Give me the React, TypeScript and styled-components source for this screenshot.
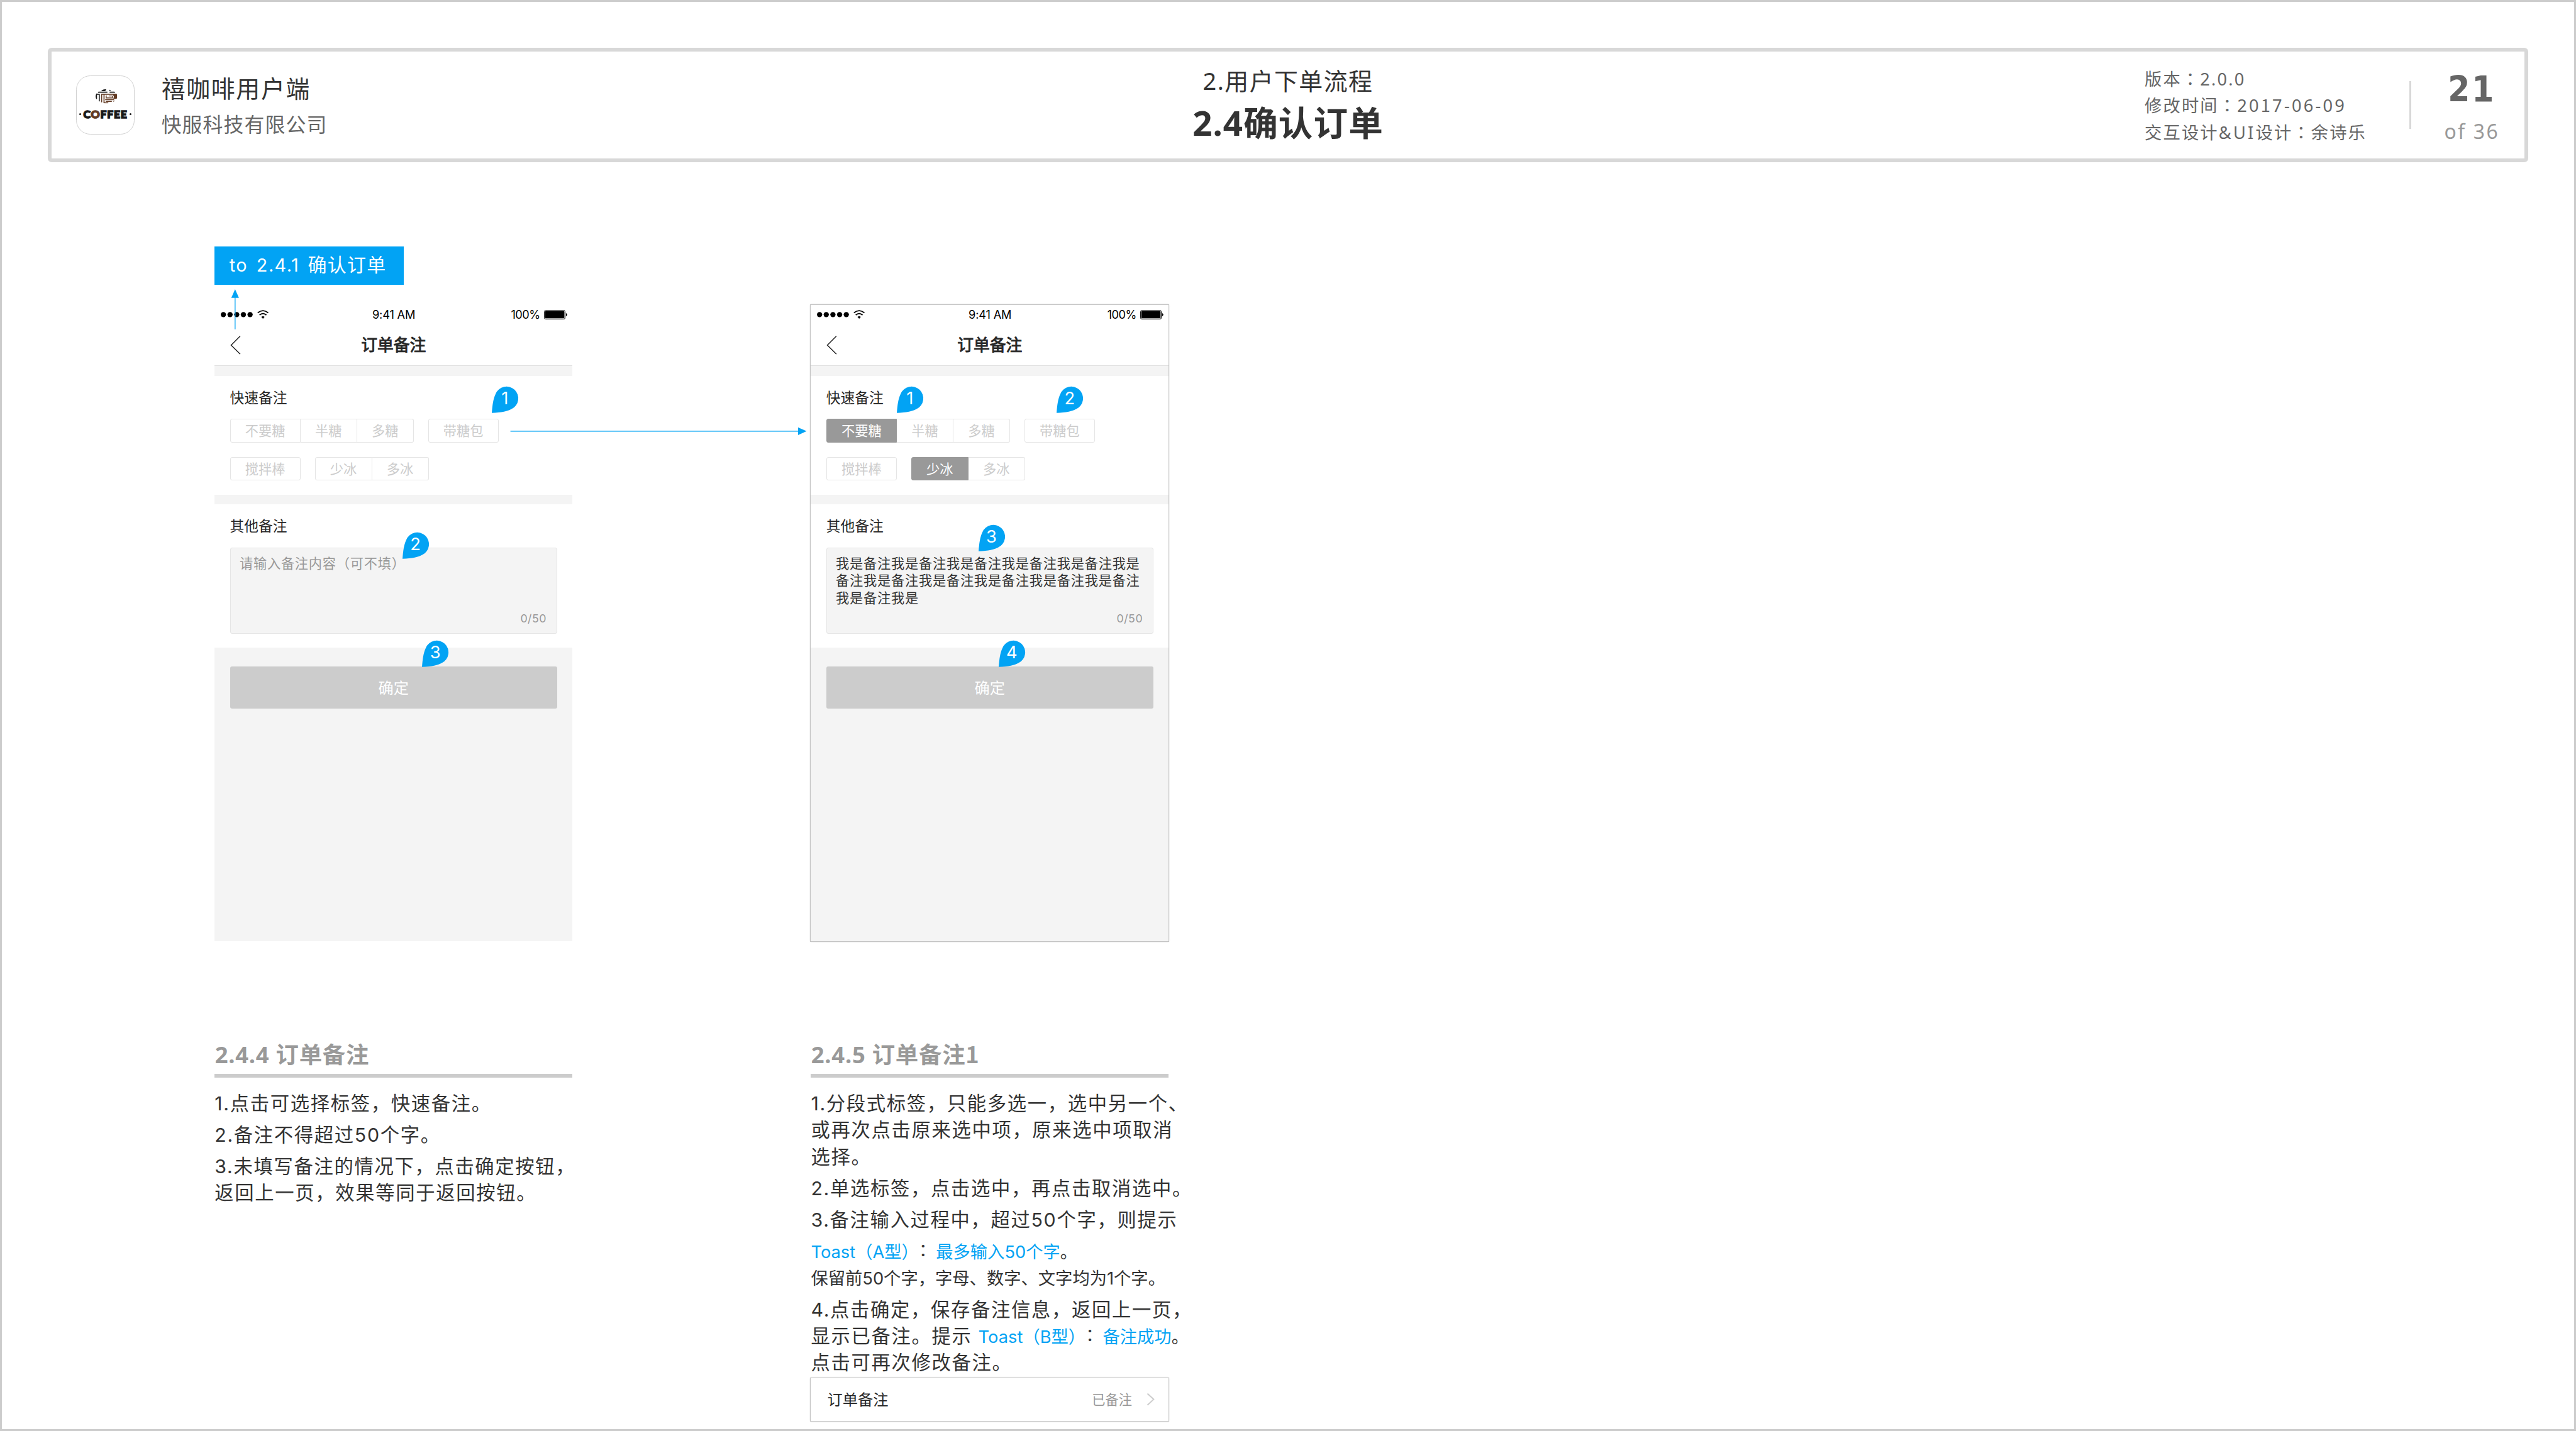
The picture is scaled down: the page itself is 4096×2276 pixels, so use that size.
import React from 'react';
import styled, { createGlobalStyle, css } from 'styled-components';

/* The board is specified on a 5400 x 3000 artboard and shown at a fixed scale. */
const SCALE = 4096 / 5400;
const u = (n: number) => `${Math.round(n * SCALE * 1000) / 1000}px`;

const BLUE = '#02a3f4';
const YAHEI = `'Noto Sans', 'Noto Sans CJK SC', sans-serif`;
const PINGFANG = `Inter, 'Noto Sans CJK SC', sans-serif`;

const type = (size: number, line: number, spacing = 0) => css`
  font-size: ${u(size)};
  line-height: ${u(line)};
  letter-spacing: ${u(spacing)};
`;

const GlobalStyle = createGlobalStyle`
  *, *::before, *::after { box-sizing: border-box; }
  html, body { margin: 0; background: #fff; }
  body { width: 4096px; height: 2276px; overflow: hidden; }
`;

const Board = styled.main`
  width: 4096px;
  height: 2276px;
  border: ${u(4)} solid #ccc;
  padding: ${u(96)};
  background: #fff;
  font-family: ${PINGFANG};
  color: #333;
  white-space: pre;
  text-spacing-trim: space-all;
  overflow: hidden;
`;

/* ---------- header ---------- */

const Header = styled.header`
  display: grid;
  grid-template-columns: 1fr auto 1fr;
  height: ${u(240)};
  border: ${u(8)} solid #d8d8d8;
  border-radius: ${u(8)};
  font-family: ${YAHEI};
`;

const Brand = styled.div`
  display: flex;
  padding: ${u(51)} 0 0 ${u(51.5)};
`;

const Logo = styled.div`
  display: flex;
  flex-direction: column;
  align-items: center;
  width: ${u(123)};
  height: ${u(123)};
  padding-top: ${u(27.2)};
  border: ${u(1.8)} solid #d2d2d2;
  border-radius: ${u(30)};
`;

const LogoMark = styled.svg`
  display: block;
  width: ${u(45.4)};
  height: ${u(29.8)};
  margin-left: ${u(3.6)};
`;

const LogoWord = styled.div`
  display: flex;
  align-items: center;
  justify-content: center;
  gap: ${u(5)};
  margin-top: ${u(6.4)};
  font-family: Lato, sans-serif;
  font-weight: 900;
  color: #1a1a1a;
  -webkit-text-stroke: ${u(2)} currentColor;
  ${type(23, 32, 1.1)}
`;

const LogoAccent = styled.span`
  color: #633b24;
`;

const LogoDot = styled.i`
  width: ${u(4)};
  height: ${u(4)};
  border-radius: 50%;
  background: #1a1a1a;
`;

const BrandText = styled.div`
  margin-left: ${u(56)};
`;

const ProductName = styled.div`
  margin-top: ${u(-7)};
  ${type(50, 66, 2.2)}
`;

const Company = styled.div`
  margin-top: ${u(15)};
  color: #666;
  ${type(42, 56, 1.5)}
`;

const Heading = styled.div`
  text-align: center;
  padding-top: ${u(28.5)};
`;

const Flow = styled.div`
  ${type(50, 66, 1.9)}
`;

const PageTitle = styled.h1`
  margin: ${u(7)} 0 0;
  font-weight: 700;
  ${type(72, 96, 1.4)}
`;

const Meta = styled.div`
  display: flex;
  justify-content: flex-end;
`;

const MetaList = styled.div`
  width: ${u(555.5)};
  padding-top: ${u(30.5)};
  color: #666;
  ${type(36, 56, 2.8)}
`;

const MetaDate = styled.span`
  letter-spacing: ${u(4.2)};
`;

const CenteredMark = styled.span`
  font-family: 'Noto Sans CJK TC', sans-serif;
  line-height: 0;
`;

const MetaDivider = styled.div`
  width: ${u(4)};
  height: ${u(100)};
  margin-top: ${u(62)};
  background: #d8d8d8;
`;

const Pager = styled.div`
  width: ${u(237)};
  padding: ${u(30)} 0 0 ${u(16)};
  text-align: center;
`;

const PageNumber = styled.div`
  font-family: 'DejaVu Sans Condensed', 'DejaVu Sans', sans-serif;
  font-weight: 700;
  color: #666;
  ${type(74, 100, 4)}
`;

const PageCount = styled.div`
  margin-top: ${u(10)};
  color: #999;
  ${type(42, 56, 3.4)}
`;

/* ---------- columns ---------- */

const Columns = styled.section`
  display: flex;
  gap: ${u(500)};
  padding: ${u(177)} 0 0 ${u(350)};
`;

const Column = styled.article`
  width: ${u(750)};
`;

const LinkSlot = styled.div`
  height: ${u(123)};
`;

const LinkTag = styled.div`
  position: relative;
  width: ${u(397)};
  height: ${u(80)};
  padding-left: ${u(31)};
  background: ${BLUE};
  color: #fff;
  word-spacing: ${u(-3.5)};
  ${type(38, 78, 1.9)}
`;

const TagCjk = styled.span`
  margin-left: ${u(8.5)};
  ${type(39.5, 0, 1.7)}
`;

const TagArrow = styled.svg`
  position: absolute;
  left: ${u(34)};
  top: ${u(90)};
  width: ${u(18)};
  height: ${u(85)};
  z-index: 3;
`;

const Phone = styled.div<{ $framed?: boolean }>`
  position: relative;
  width: ${u(750)};
  height: ${u(1334)};
  background: #f4f4f4;
  ${p => p.$framed && css`box-shadow: 0 0 0 ${u(1.4)} #c4c4c4, 0 0 ${u(4)} rgba(0, 0, 0, 0.25);`}
`;

const StatusBar = styled.div`
  display: grid;
  grid-template-columns: 1fr auto 1fr;
  align-items: center;
  height: ${u(40)};
  padding: 0 ${u(12)} 0 ${u(13)};
  background: #fff;
  color: #000;
  ${type(24, 40, -0.2)}
`;

const Signal = styled.svg`
  display: block;
  width: ${u(102)};
  height: ${u(24)};
`;

const Power = styled.div`
  display: flex;
  align-items: center;
  justify-content: flex-end;
  gap: ${u(8.5)};
  margin-right: ${u(-1.5)};
  letter-spacing: ${u(-0.7)};
`;

const Battery = styled.svg`
  display: block;
  width: ${u(49)};
  height: ${u(20)};
`;

const NavBar = styled.div`
  display: flex;
  align-items: center;
  height: ${u(88)};
  padding: 0 ${u(32)};
  border-bottom: 1px solid #dfdfdf;
  background: #fff;
`;

const BackIcon = styled.svg`
  width: ${u(24)};
  height: ${u(42)};
`;

const NavTitle = styled.div`
  flex: 1;
  margin-right: ${u(24)};
  padding-top: ${u(3)};
  text-align: center;
  color: #262626;
  -webkit-text-stroke: ${u(1.2)} currentColor;
  ${type(34, 80, 0)}
`;

const Panel = styled.div`
  height: ${u(250)};
  margin-top: ${u(20)};
  padding: 0 ${u(32)};
  background: #fff;

  & + & { height: ${u(300)}; }
`;

const PanelTitle = styled.div`
  height: ${u(90)};
  color: #262626;
  ${type(30, 92, 0)}
`;

const ChipRow = styled.div`
  display: flex;
  gap: ${u(30)};
  margin-bottom: ${u(30)};
`;

const Segments = styled.div`
  display: flex;
`;

const Chip = styled.div<{ $on?: boolean }>`
  height: ${u(50)};
  padding: 0 ${u(30.7)};
  border: 1px solid ${p => (p.$on ? '#999' : '#e5e5e5')};
  background: ${p => (p.$on ? '#999' : '#fff')};
  color: ${p => (p.$on ? '#fff' : '#ccc')};
  ${type(28, 48, 0)}

  & + & { border-left: 0; }
  &:first-child { border-top-left-radius: ${u(4)}; border-bottom-left-radius: ${u(4)}; }
  &:last-child { border-top-right-radius: ${u(4)}; border-bottom-right-radius: ${u(4)}; }
`;

const RemarkBox = styled.div<{ $filled?: boolean }>`
  display: flex;
  flex-direction: column;
  justify-content: space-between;
  width: ${u(686)};
  height: ${u(181)};
  padding: ${u(15)} ${u(21)} ${u(13)} ${u(19)};
  border: 1px solid #e5e5e5;
  border-radius: ${u(4)};
  background: #f4f4f4;
  color: ${p => (p.$filled ? '#333' : '#999')};
  ${type(28, 36, 1)}
`;

const Counter = styled.div`
  text-align: right;
  color: #999;
  ${type(23.5, 36, 0.6)}
`;

const Confirm = styled.div`
  width: ${u(686)};
  height: ${u(88)};
  margin: ${u(40)} auto 0;
  border-radius: ${u(4)};
  background: #ccc;
  color: #fff;
  text-align: center;
  ${type(32, 90, 0)}
`;

const PinBox = styled.div<{ $x: number; $y: number }>`
  position: absolute;
  left: ${p => u(p.$x)};
  top: ${p => u(p.$y)};
  width: ${u(56)};
  height: ${u(56)};
  padding-right: ${u(1)};
  color: #fff;
  text-align: center;
  z-index: 2;
  ${type(36, 49, 0)}
`;

const PinShape = styled.svg`
  position: absolute;
  inset: 0;
  width: 100%;
  height: 100%;
  overflow: visible;
`;

const PinLabel = styled.span`
  position: relative;
`;

const Connector = styled.svg`
  position: absolute;
  left: ${u(619)};
  top: ${u(255)};
  width: ${u(622)};
  height: ${u(18)};
`;

/* ---------- annotations ---------- */

const NoteTitle = styled.h2`
  height: ${u(86)};
  margin: ${u(200)} 0 ${u(26)};
  padding-left: ${u(0.5)};
  border-bottom: ${u(8)} solid #ccc;
  color: #999;
  font-family: ${YAHEI};
  font-weight: 700;
  ${type(48, 76, 1)}
`;

const FootedDigit = styled.span`
  font-family: 'Noto Sans CJK SC', sans-serif;
  line-height: 0;
`;

const Para = styled.div`
  margin: 0 0 ${u(10)};
  ${type(40, 56, 2.2)}
`;

const SmallPara = styled.div`
  margin: ${u(12)} 0 ${u(8)};
  ${type(36, 56, 0)}
`;

const Line = styled.div`
  height: ${u(56)};
`;

const MixedLine = styled.div`
  display: flex;
  align-items: baseline;
  height: ${u(56)};
`;

const Small = styled.span`
  ${type(36, 56, 0)}
`;

const Hint = styled.span`
  color: ${BLUE};
`;

const SideMark = styled.span`
  font-family: 'Noto Sans CJK SC', sans-serif;
  line-height: 0;
  vertical-align: ${u(4)};
`;

const RowCard = styled.div`
  display: flex;
  align-items: center;
  height: ${u(90)};
  margin-top: ${u(-6)};
  padding: 0 ${u(30)} 0 ${u(34.5)};
  background: #fff;
  box-shadow: 0 0 0 ${u(1.4)} #c4c4c4, 0 0 ${u(4)} rgba(0, 0, 0, 0.25);
`;

const RowLabel = styled.span`
  flex: 1;
  color: #262626;
  ${type(32, 88, 0)}
`;

const RowValue = styled.span`
  margin-right: ${u(30)};
  color: #999;
  ${type(28, 88, 0)}
`;

const Chevron = styled.svg`
  width: ${u(17)};
  height: ${u(28)};
`;

/* ---------- parts ---------- */

const CoffeeMark = () => (
  <LogoMark viewBox="0 0 136 89" fill="none" strokeWidth="6.5">
    <clipPath id="bean">
      <ellipse cx="68" cy="44.5" rx="68" ry="45" />
    </clipPath>
    <g clipPath="url(#bean)">
      <g stroke="#1a1a1a">
        <path d="M46 3H66M38 8H62M86 6H94M15 18H74M88 18H122" />
        <path d="M4 26V62" strokeWidth="10" />
        <path d="M4 31H23V76" />
      </g>
      <g stroke="#633b24">
        <path d="M38 82V31H136M53 31V85H80" />
        <path d="M64 42H72M66 42V54M82 42H106V54H64M60 65H116M64 76H102" strokeWidth="5.5" />
        <path d="M112 76H128" strokeWidth="8" />
        <path d="M110 29H136V60H112V54C116 50 116 42 110 38Z" fill="#633b24" stroke="none" />
      </g>
    </g>
  </LogoMark>
);

const Pin = ({ x, y, n }: { x: number; y: number; n: number }) => (
  <PinBox $x={x} $y={y}>
    <PinShape viewBox="0 0 56 56">
      <path
        d="M0 55C1.4 38 3 25 8 15A24.7 24.7 0 1 1 42 46.5C34 51.5 20 54.4 0 55Z"
        fill={BLUE}
      />
    </PinShape>
    <PinLabel>{n}</PinLabel>
  </PinBox>
);

type PinSpec = [number, number];

type ScreenProps = {
  framed?: boolean;
  selected?: string[];
  lines: string[];
  filled?: boolean;
  pins: PinSpec[];
  children?: React.ReactNode;
};

const ROWS = [
  [['不要糖', '半糖', '多糖'], ['带糖包']],
  [['搅拌棒'], ['少冰', '多冰']],
];

const Screen = ({ framed, selected = [], lines, filled, pins, children }: ScreenProps) => (
  <Phone $framed={framed}>
    <StatusBar>
      <Signal viewBox="0 0 102 24">
        {[5.5, 19.5, 33.5, 47.5, 61.5].map(cx => (
          <circle key={cx} cx={cx} cy="12.3" r="5.5" />
        ))}
        <g fill="none" stroke="#000" strokeWidth="2.4">
          <path d="M77.5 8.6Q88.5 -0.2 99.5 8.6" />
          <path d="M81.3 13.4Q88.5 7 95.7 13.4" />
        </g>
        <path d="M85 17Q88.5 14.6 92 17L88.5 21Z" />
      </Signal>
      <span>9:41 AM</span>
      <Power>
        100%
        <Battery viewBox="0 0 49 20">
          <rect x="0.75" y="1" width="43.5" height="18" rx="2.5" fill="none" stroke="#000" strokeWidth="1.3" />
          <rect x="2.2" y="2.5" width="40.6" height="15" rx="1" />
          <path d="M46 6.5Q48.5 7.5 48.5 10T46 13.5Z" />
        </Battery>
      </Power>
    </StatusBar>
    <NavBar>
      <BackIcon viewBox="0 0 24 42" fill="none" stroke="#262626" strokeWidth="2">
        <path d="M21 2L2 21L21 40" />
      </BackIcon>
      <NavTitle>订单备注</NavTitle>
    </NavBar>
    <Panel>
      <PanelTitle>快速备注</PanelTitle>
      {ROWS.map((row, i) => (
        <ChipRow key={i}>
          {row.map(group => (
            <Segments key={group[0]}>
              {group.map(label => (
                <Chip key={label} $on={selected.includes(label)}>{label}</Chip>
              ))}
            </Segments>
          ))}
        </ChipRow>
      ))}
    </Panel>
    <Panel>
      <PanelTitle>其他备注</PanelTitle>
      <RemarkBox $filled={filled}>
        <div>{lines.map(l => <div key={l}>{l}</div>)}</div>
        <Counter>0/50</Counter>
      </RemarkBox>
    </Panel>
    <Confirm>确定</Confirm>
    {pins.map(([x, y], i) => <Pin key={i} x={x} y={y} n={i + 1} />)}
    {children}
  </Phone>
);

const Colon = () => <CenteredMark lang="zh-TW">：</CenteredMark>;

export default function App() {
  return (
    <>
      <GlobalStyle />
      <Board lang="zh-CN">
        <Header>
          <Brand>
            <Logo>
              <CoffeeMark />
              <LogoWord>
                <LogoDot />
                <span>C<LogoAccent>O</LogoAccent>FFEE</span>
                <LogoDot />
              </LogoWord>
            </Logo>
            <BrandText>
              <ProductName>禧咖啡用户端</ProductName>
              <Company>快服科技有限公司</Company>
            </BrandText>
          </Brand>
          <Heading>
            <Flow>2.用户下单流程</Flow>
            <PageTitle>2.4确认订单</PageTitle>
          </Heading>
          <Meta>
            <MetaList>
              <div>版本<Colon />2.0.0</div>
              <div>修改时间<Colon /><MetaDate>20<FootedDigit>1</FootedDigit>7-06-09</MetaDate></div>
              <div>交互设计<MetaDate>&amp;UI</MetaDate>设计<Colon />余诗乐</div>
            </MetaList>
            <MetaDivider />
            <Pager>
              <PageNumber>21</PageNumber>
              <PageCount>of 36</PageCount>
            </Pager>
          </Meta>
        </Header>

        <Columns>
          <Column>
            <LinkSlot>
              <LinkTag>
                to  2.4.1 <TagCjk>确认订单</TagCjk>
                <TagArrow viewBox="0 0 18 85">
                  <path d="M9 0L17 18H1Z" fill={BLUE} />
                  <path d="M9 17V84" stroke={BLUE} strokeWidth="1.8" />
                </TagArrow>
              </LinkTag>
            </LinkSlot>
            <Screen
              lines={['请输入备注内容（可不填）']}
              pins={[[581, 171], [393.5, 477], [435, 704]]}
            >
              <Connector viewBox="0 0 622 18">
                <path d="M0.5 9H606" stroke={BLUE} strokeWidth="2" />
                <path d="M604 1L622 9L604 17Z" fill={BLUE} />
              </Connector>
            </Screen>
            <NoteTitle>2.4.4 订单备注</NoteTitle>
            <Para>1.点击可选择标签，快速备注。</Para>
            <Para>2.备注不得超过50个字。</Para>
            <Para>
              <Line>3.未填写备注的情况下，点击确定按钮，</Line>
              <Line>返回上一页，效果等同于返回按钮。</Line>
            </Para>
          </Column>

          <Column>
            <LinkSlot />
            <Screen
              framed
              filled
              selected={['不要糖', '少冰']}
              lines={[
                '我是备注我是备注我是备注我是备注我是备注我是',
                '备注我是备注我是备注我是备注我是备注我是备注',
                '我是备注我是',
              ]}
              pins={[[180, 171], [515, 171], [351, 461], [393.5, 704]]}
            />
            <NoteTitle>2.4.5 订单备注<FootedDigit>1</FootedDigit></NoteTitle>
            <Para>
              <Line>1.分段式标签，只能多选一，选中另一个、</Line>
              <Line>或再次点击原来选中项，原来选中项取消</Line>
              <Line>选择。</Line>
            </Para>
            <Para>2.单选标签，点击选中，再点击取消选中。</Para>
            <Para>3.备注输入过程中，超过50个字，则提示</Para>
            <SmallPara>
              <Line><Hint>Toast（A型）</Hint><SideMark>：</SideMark><Hint>最多输入50个字</Hint>。</Line>
              <Line>保留前50个字，字母、数字、文字均为1个字。</Line>
            </SmallPara>
            <Para>
              <Line>4.点击确定，保存备注信息，返回上一页，</Line>
              <MixedLine>
                <span>显示已备注。提示 </span>
                <Small><Hint>Toast（B型）</Hint><SideMark>：</SideMark><Hint>备注成功</Hint>。</Small>
              </MixedLine>
              <Line>点击可再次修改备注。</Line>
            </Para>
            <RowCard>
              <RowLabel>订单备注</RowLabel>
              <RowValue>已备注</RowValue>
              <Chevron viewBox="0 0 17 28" fill="none" stroke="#ccc" strokeWidth="2.6">
                <path d="M2 2L15 14L2 26" />
              </Chevron>
            </RowCard>
          </Column>
        </Columns>
      </Board>
    </>
  );
}
